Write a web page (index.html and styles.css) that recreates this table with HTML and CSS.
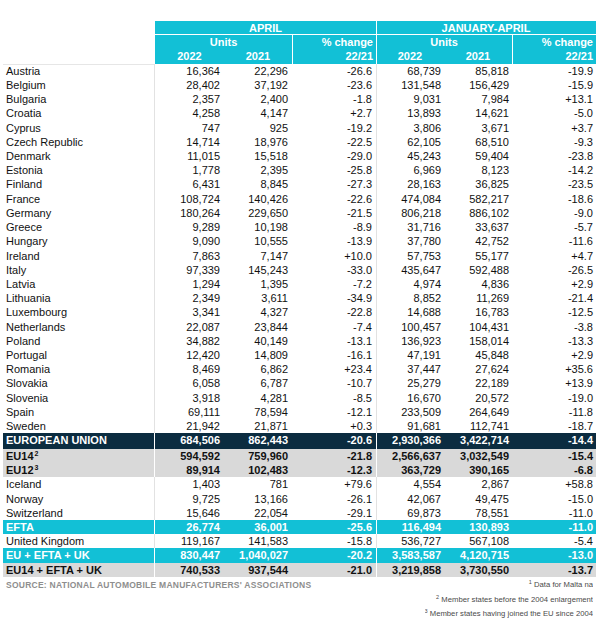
FILE: index.html
```html
<!DOCTYPE html>
<html>
<head>
<meta charset="utf-8">
<link rel="stylesheet" href="styles.css">
</head>
<body>
<div class="page">
<table class="data">
<colgroup>
<col class="c-label"><col class="c-a"><col class="c-b"><col class="c-p"><col class="c-a2"><col class="c-b2"><col class="c-p">
</colgroup>
<thead>
<tr class="h1">
<th class="blank" rowspan="3"></th>
<th colspan="3" class="grp">APRIL</th>
<th colspan="3" class="grp sep">JANUARY-APRIL</th>
</tr>
<tr class="h2">
<th colspan="2" class="ctr">Units</th><th class="rt sep">% change</th>
<th colspan="2" class="ctr sep">Units</th><th class="rt sep jr">% change</th>
</tr>
<tr class="h3">
<th class="ctr">2022</th><th class="ctr">2021</th><th class="rt sep">22/21</th>
<th class="ctr sep">2022</th><th class="ctr">2021</th><th class="rt sep jr">22/21</th>
</tr>
</thead>
<tbody>
<tr class="first"><th>Austria</th><td>16,364</td><td>22,296</td><td>-26.6</td><td class="sep">68,739</td><td>85,818</td><td>-19.9</td></tr>
<tr><th>Belgium</th><td>28,402</td><td>37,192</td><td>-23.6</td><td class="sep">131,548</td><td>156,429</td><td>-15.9</td></tr>
<tr><th>Bulgaria</th><td>2,357</td><td>2,400</td><td>-1.8</td><td class="sep">9,031</td><td>7,984</td><td>+13.1</td></tr>
<tr><th>Croatia</th><td>4,258</td><td>4,147</td><td>+2.7</td><td class="sep">13,893</td><td>14,621</td><td>-5.0</td></tr>
<tr><th>Cyprus</th><td>747</td><td>925</td><td>-19.2</td><td class="sep">3,806</td><td>3,671</td><td>+3.7</td></tr>
<tr><th>Czech Republic</th><td>14,714</td><td>18,976</td><td>-22.5</td><td class="sep">62,105</td><td>68,510</td><td>-9.3</td></tr>
<tr><th>Denmark</th><td>11,015</td><td>15,518</td><td>-29.0</td><td class="sep">45,243</td><td>59,404</td><td>-23.8</td></tr>
<tr><th>Estonia</th><td>1,778</td><td>2,395</td><td>-25.8</td><td class="sep">6,969</td><td>8,123</td><td>-14.2</td></tr>
<tr><th>Finland</th><td>6,431</td><td>8,845</td><td>-27.3</td><td class="sep">28,163</td><td>36,825</td><td>-23.5</td></tr>
<tr><th>France</th><td>108,724</td><td>140,426</td><td>-22.6</td><td class="sep">474,084</td><td>582,217</td><td>-18.6</td></tr>
<tr><th>Germany</th><td>180,264</td><td>229,650</td><td>-21.5</td><td class="sep">806,218</td><td>886,102</td><td>-9.0</td></tr>
<tr><th>Greece</th><td>9,289</td><td>10,198</td><td>-8.9</td><td class="sep">31,716</td><td>33,637</td><td>-5.7</td></tr>
<tr><th>Hungary</th><td>9,090</td><td>10,555</td><td>-13.9</td><td class="sep">37,780</td><td>42,752</td><td>-11.6</td></tr>
<tr><th>Ireland</th><td>7,863</td><td>7,147</td><td>+10.0</td><td class="sep">57,753</td><td>55,177</td><td>+4.7</td></tr>
<tr><th>Italy</th><td>97,339</td><td>145,243</td><td>-33.0</td><td class="sep">435,647</td><td>592,488</td><td>-26.5</td></tr>
<tr><th>Latvia</th><td>1,294</td><td>1,395</td><td>-7.2</td><td class="sep">4,974</td><td>4,836</td><td>+2.9</td></tr>
<tr><th>Lithuania</th><td>2,349</td><td>3,611</td><td>-34.9</td><td class="sep">8,852</td><td>11,269</td><td>-21.4</td></tr>
<tr><th>Luxembourg</th><td>3,341</td><td>4,327</td><td>-22.8</td><td class="sep">14,688</td><td>16,783</td><td>-12.5</td></tr>
<tr><th>Netherlands</th><td>22,087</td><td>23,844</td><td>-7.4</td><td class="sep">100,457</td><td>104,431</td><td>-3.8</td></tr>
<tr><th>Poland</th><td>34,882</td><td>40,149</td><td>-13.1</td><td class="sep">136,923</td><td>158,014</td><td>-13.3</td></tr>
<tr><th>Portugal</th><td>12,420</td><td>14,809</td><td>-16.1</td><td class="sep">47,191</td><td>45,848</td><td>+2.9</td></tr>
<tr><th>Romania</th><td>8,469</td><td>6,862</td><td>+23.4</td><td class="sep">37,447</td><td>27,624</td><td>+35.6</td></tr>
<tr><th>Slovakia</th><td>6,058</td><td>6,787</td><td>-10.7</td><td class="sep">25,279</td><td>22,189</td><td>+13.9</td></tr>
<tr><th>Slovenia</th><td>3,918</td><td>4,281</td><td>-8.5</td><td class="sep">16,670</td><td>20,572</td><td>-19.0</td></tr>
<tr><th>Spain</th><td>69,111</td><td>78,594</td><td>-12.1</td><td class="sep">233,509</td><td>264,649</td><td>-11.8</td></tr>
<tr><th>Sweden</th><td>21,942</td><td>21,871</td><td>+0.3</td><td class="sep">91,681</td><td>112,741</td><td>-18.7</td></tr>
<tr class="total eu"><th>EUROPEAN UNION</th><td>684,506</td><td>862,443</td><td>-20.6</td><td class="sep">2,930,366</td><td>3,422,714</td><td>-14.4</td></tr>
<tr class="total grey"><th>EU14<sup>2</sup></th><td>594,592</td><td>759,960</td><td>-21.8</td><td class="sep">2,566,637</td><td>3,032,549</td><td>-15.4</td></tr>
<tr class="total grey"><th>EU12<sup>3</sup></th><td>89,914</td><td>102,483</td><td>-12.3</td><td class="sep">363,729</td><td>390,165</td><td>-6.8</td></tr>
<tr><th>Iceland</th><td>1,403</td><td>781</td><td>+79.6</td><td class="sep">4,554</td><td>2,867</td><td>+58.8</td></tr>
<tr><th>Norway</th><td>9,725</td><td>13,166</td><td>-26.1</td><td class="sep">42,067</td><td>49,475</td><td>-15.0</td></tr>
<tr><th>Switzerland</th><td>15,646</td><td>22,054</td><td>-29.1</td><td class="sep">69,873</td><td>78,551</td><td>-11.0</td></tr>
<tr class="total cyan"><th>EFTA</th><td>26,774</td><td>36,001</td><td>-25.6</td><td class="sep">116,494</td><td>130,893</td><td>-11.0</td></tr>
<tr><th>United Kingdom</th><td>119,167</td><td>141,583</td><td>-15.8</td><td class="sep">536,727</td><td>567,108</td><td>-5.4</td></tr>
<tr class="total cyan"><th>EU + EFTA + UK</th><td>830,447</td><td>1,040,027</td><td>-20.2</td><td class="sep">3,583,587</td><td>4,120,715</td><td>-13.0</td></tr>
<tr class="total grey"><th>EU14 + EFTA + UK</th><td>740,533</td><td>937,544</td><td>-21.0</td><td class="sep">3,219,858</td><td>3,730,550</td><td>-13.7</td></tr>
</tbody>
</table>
<div class="foot">
<div class="source">SOURCE: NATIONAL AUTOMOBILE MANUFACTURERS' ASSOCIATIONS</div>
<div class="notes">
<div class="note"><sup>1</sup> Data for Malta na</div>
<div class="note"><sup>2</sup> Member states before the 2004 enlargement</div>
<div class="note"><sup>3</sup> Member states having joined the EU since 2004</div>
</div>
</div>
</div>
</body>
</html>
```
FILE: styles.css
```css
html, body {
  margin: 0;
  padding: 0;
  background: #ffffff;
}
body {
  font-family: "Liberation Sans", Arial, sans-serif;
  color: #111111;
}
.page {
  width: 593px;
  padding: 21px 4px 0 3px;
}
.data {
  width: 593px;
  table-layout: fixed;
  border-collapse: separate;
  border-spacing: 0;
  font-size: 11px;
}
.c-label { width: 152px; }
.c-a { width: 69px; }
.c-b { width: 68px; }
.c-p { width: 84px; }
.c-a2 { width: 68px; }
.c-b2 { width: 68px; }
.data th, .data td {
  height: 14.22px;
  line-height: 14.22px;
  padding: 0;
  white-space: nowrap;
  overflow: hidden;
}
/* header */
.data thead th {
  background: #12c0d6;
  color: #ffffff;
  font-weight: bold;
}
.data thead th.blank {
  background: #ffffff;
}
.data thead .grp { text-align: center; }
.data thead .h1 th.grp { box-shadow: inset 0 -1px 0 #ffffff; }
.data thead .h1 th.grp.sep { box-shadow: inset 1px 0 0 #ffffff, inset 0 -1px 0 #ffffff; }
.data thead .ctr { text-align: center; }
.data thead .rt { text-align: right; padding-right: 3px; }
.data thead .sep { box-shadow: inset 1px 0 0 #ffffff; }
/* body */
.data tbody th {
  text-align: left;
  font-weight: normal;
  padding-left: 3px;
  box-shadow: inset -1px 0 0 #e2e2e2;
}
.data tbody tr.first th {
  box-shadow: inset -1px 0 0 #e2e2e2, inset 0 1px 0 #e6e6e6;
}
.data tbody td {
  text-align: right;
  padding-right: 4px;
}
.data tbody td:nth-child(n+5) {
  padding-right: 3px;
}
.data tbody td.sep {
  box-shadow: inset 1px 0 0 #e2e2e2;
}
.data tbody tr.total th,
.data tbody tr.total td {
  font-weight: bold;
}
.data tbody tr.eu th,
.data tbody tr.eu td {
  height: 15.6px;
  line-height: 15.6px;
  background: #0b2c40;
  color: #ffffff;
}
.data tbody tr.cyan th,
.data tbody tr.cyan td {
  background: #12c0d6;
  color: #ffffff;
}
.data tbody tr.grey th,
.data tbody tr.grey td {
  background: #d9d9d9;
  color: #111111;
}
.data tbody tr.eu th,
.data tbody tr.cyan th,
.data tbody tr.grey th {
  box-shadow: inset -1px 0 0 #ffffff;
}
.data tbody tr.eu td.sep,
.data tbody tr.cyan td.sep,
.data tbody tr.grey td.sep {
  box-shadow: inset 1px 0 0 #ffffff;
}
.data tbody sup {
  font-size: 7px;
  line-height: 0;
  vertical-align: 4px;
  margin-left: 1px;
}
/* footer */
.foot {
  display: flex;
  justify-content: space-between;
  align-items: flex-start;
  padding: 0 3px 0 3px;
}
.source {
  font-size: 8.5px;
  font-weight: bold;
  color: #8e8e8e;
  letter-spacing: 0.25px;
  line-height: 17px;
}
.notes {
  text-align: right;
  font-size: 7.7px;
  color: #4a4a4a;
  padding-top: 1.5px;
}
.note {
  height: 14.5px;
  line-height: 14.5px;
  overflow: hidden;
}
.notes sup {
  font-size: 5.5px;
  line-height: 0;
  vertical-align: 3px;
}
```
